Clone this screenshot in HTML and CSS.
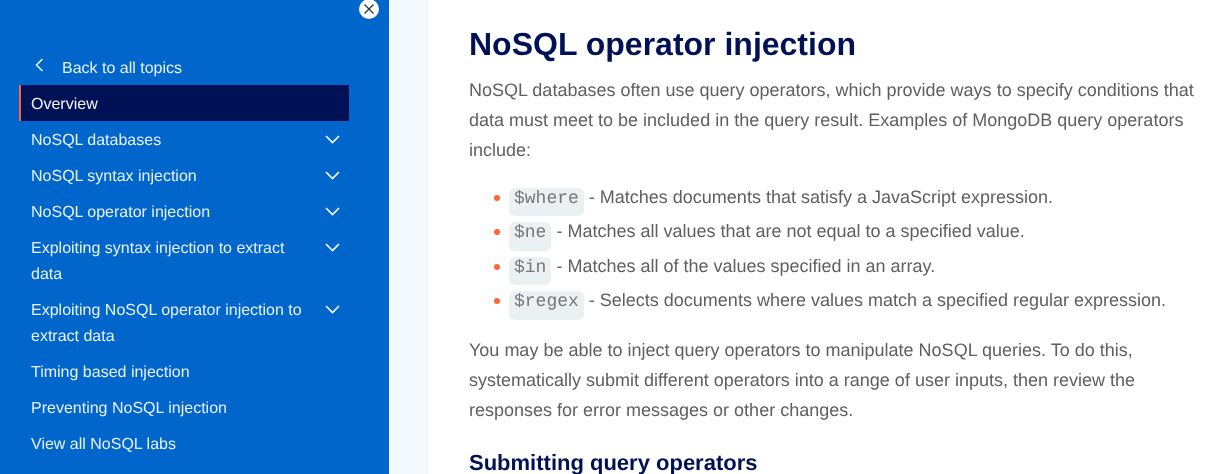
FILE: index.html
```html
<!DOCTYPE html>

<html>
<head>
  <meta http-equiv="Content-Type" content="text/html; charset=UTF-8">
  <title>NoSQL operator injection</title>

  <link rel="stylesheet" href="styles.css">
</head>
<body>
  <div class="page">
    <nav class="sidebar">
      <span class="close">
        <svg width="12" height="12" viewBox="0 0 12 12"><path d="M1.500 1.500l9 9M10.500 1.500l-9 9" fill="none" stroke="#333" stroke-width="1.3"/></svg>
      </span>
      <a class="back">
        <svg width="9" height="14" viewBox="0 0 9 14"><path d="M7.500 1L1.500 7l6 6" fill="none" stroke="#e8f1fb" stroke-width="1.600"/></svg>
        Back to all topics
      </a>
      <ul class="topics">
        <li class="topic active"><span>Overview</span></li>
        <li class="topic"><span>NoSQL databases</span><svg class="chev" width="15" height="9" viewBox="0 0 15 9"><path d="M1 1l6.500 6.500L14 1" fill="none" stroke="#fff" stroke-width="1.600"/></svg></li>
        <li class="topic"><span>NoSQL syntax injection</span><svg class="chev" width="15" height="9" viewBox="0 0 15 9"><path d="M1 1l6.500 6.500L14 1" fill="none" stroke="#fff" stroke-width="1.600"/></svg></li>
        <li class="topic"><span>NoSQL operator injection</span><svg class="chev" width="15" height="9" viewBox="0 0 15 9"><path d="M1 1l6.500 6.500L14 1" fill="none" stroke="#fff" stroke-width="1.600"/></svg></li>
        <li class="topic"><span>Exploiting syntax injection to extract data</span><svg class="chev" width="15" height="9" viewBox="0 0 15 9"><path d="M1 1l6.500 6.500L14 1" fill="none" stroke="#fff" stroke-width="1.600"/></svg></li>
        <li class="topic"><span>Exploiting NoSQL operator injection to extract data</span><svg class="chev" width="15" height="9" viewBox="0 0 15 9"><path d="M1 1l6.500 6.500L14 1" fill="none" stroke="#fff" stroke-width="1.600"/></svg></li>
        <li class="topic"><span>Timing based injection</span></li>
        <li class="topic"><span>Preventing NoSQL injection</span></li>
        <li class="topic"><span>View all NoSQL labs</span></li>
      </ul>
    </nav>

    <div class="gutter"></div>

    <main class="content">
      <h1>NoSQL operator injection</h1>
      <p>NoSQL databases often use query operators, which provide ways to specify conditions that data must meet to be included in the query result. Examples of MongoDB query operators include:</p>
      <ul class="operators">
        <li><code>$where</code> - Matches documents that satisfy a JavaScript expression.</li>
        <li><code>$ne</code> - Matches all values that are not equal to a specified value.</li>
        <li><code>$in</code> - Matches all of the values specified in an array.</li>
        <li><code>$regex</code> - Selects documents where values match a specified regular expression.</li>
      </ul>
      <p>You may be able to inject query operators to manipulate NoSQL queries. To do this, systematically submit different operators into a range of user inputs, then review the responses for error messages or other changes.</p>
      <h2>Submitting query operators</h2>
    </main>
  </div>
</body>
</html>
```

FILE: styles.css
```css
/* reset things */
* {
  margin: 0; padding: 0;
  box-sizing: border-box;
}
html, body {
  width: 100%;
  height: 100%;
  overflow: hidden;
  font-family: "Liberation Sans", Arial, sans-serif;
  text-rendering: geometricPrecision;
  background-color: #FFF;
}

.page {
  display: flex;
  height: 474px;
  will-change: opacity;
}

.sidebar {
  position: relative;
  flex: 0 0 389px;
  padding: 57px 40px 0 19px;
  background-color: #0066CC;
}
  .close {
    position: absolute;
    top: -1px;
    left: 359px;
    display: flex;
    align-items: center;
    justify-content: center;
    width: 20px;
    height: 20px;
    border-radius: 50%;
    background-color: #FFF;
  }
  .back {
    display: flex;
    height: 28px;
    padding: 0 0 0 16px;
    gap: 18px;
    align-items: flex-start;
    font-size: 16px;
    line-height: 24px;
    color: #E8F1FB;
  }
    .back svg {
      margin-top: 1px;
    }
  .topics {
    list-style: none;
  }
    .topic {
      display: flex;
      justify-content: space-between;
      padding: 7px 9px 3px 12px;
      font-size: 16px;
      line-height: 26px;
      color: #E8F1FB;
    }
      .topic span {
        max-width: 280px;
      }
      .chev {
        flex: none;
        margin-top: 7px;
      }
    .active {
      border-left: 2px solid #FF6633;
      padding-left: 10px;
      color: #F2F5FB;
      background-color: #001155;
    }

.gutter {
  flex: 0 0 40px;
  background-color: #F3FAFD;
}

.content {
  flex: 1;
  padding: 24px 10px 0 40px;
  font-size: 18px;
  line-height: 30px;
  color: #5F5F5F;
}
  .content h1 {
    margin-bottom: 11px;
    font-size: 32px;
    line-height: 40px;
    color: #001155;
  }
  .content h2 {
    margin-top: 23px;
    font-size: 22px;
    line-height: 30px;
    color: #001155;
  }
  .operators {
    margin: 17px 0 15px 40px;
    list-style: none;
  }
    .operators li {
      position: relative;
    }
      .operators li::before {
        content: "";
        position: absolute;
        top: 13px;
        left: -15px;
        width: 6px;
        height: 6px;
        border-radius: 50%;
        background-color: #FF6633;
      }
    .operators code {
      display: inline-block;
      padding: 1px 5px 7.4px;
      font: normal 18px/20px Courier, "Liberation Mono", monospace;
      color: #777;
      border-radius: 6px;
      background-color: #EBF0F2;
    }
```
